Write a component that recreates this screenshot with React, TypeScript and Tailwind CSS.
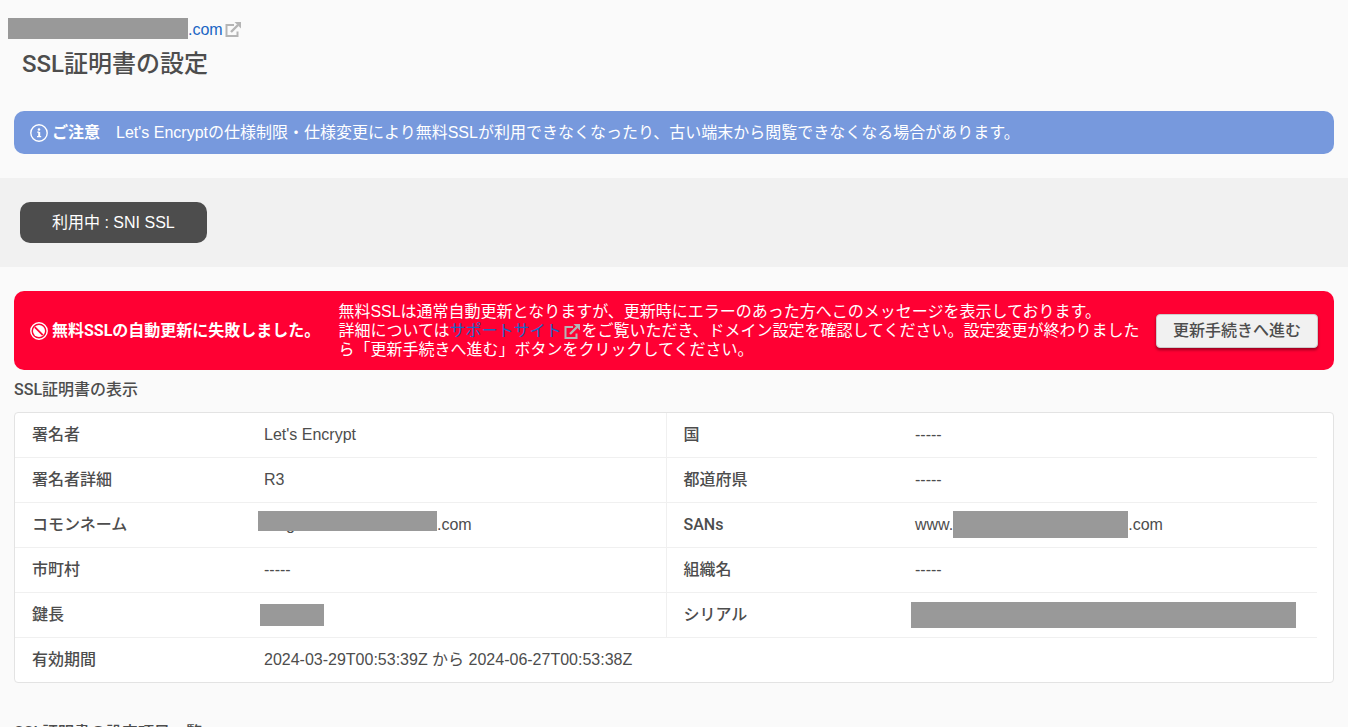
import { ReactNode } from 'react';

function ExternalIcon() {
  return (
    <svg viewBox="0 0 16 16" className="mx-0.5 inline-block size-4 text-[#b5b5b5]" fill="none" stroke="currentColor" strokeWidth="2" aria-hidden="true">
      <path d="M9 3H1.5V14H12.5V9.5" />
      <path d="M6 10L13 3" strokeWidth="2.4" />
      <path d="M9.5 0H16V6.5Z" fill="currentColor" stroke="none" />
    </svg>
  );
}

function InfoIcon() {
  return (
    <svg viewBox="0 0 18 18" className="size-[18px] shrink-0" fill="none" aria-hidden="true">
      <circle cx="9" cy="9" r="8.2" stroke="currentColor" strokeWidth="1.4" />
      <circle cx="9" cy="5.5" r="1.3" fill="currentColor" />
      <path d="M9.2 8V12.4" stroke="currentColor" strokeWidth="2" />
      <path d="M7.2 8.2H9.2M7 12.6H11.2" stroke="currentColor" strokeWidth="1.2" />
    </svg>
  );
}

function BanIcon() {
  return (
    <svg viewBox="0 0 18 18" className="size-[18px] shrink-0" fill="none" aria-hidden="true">
      <circle cx="9" cy="9" r="8.2" stroke="currentColor" strokeWidth="1.4" />
      <circle cx="9" cy="9" r="6" fill="currentColor" />
      <path d="M4.8 5.2L12.8 13.2" stroke="#ff0033" strokeWidth="1.8" />
    </svg>
  );
}

function Mask({ size }: { size: string }) {
  return <span className={`inline-block bg-[#999] align-middle ${size}`} />;
}

type Pair = [string, ReactNode];

const rows: [Pair, Pair][] = [
  [['署名者', "Let's Encrypt"], ['国', '-----']],
  [['署名者詳細', 'R3'], ['都道府県', '-----']],
  [
    [
      'コモンネーム',
      <div className="-ml-1.5 flex items-center">
        <span className="relative h-6 w-[179px]">
          <span className="pl-7">g</span>
          <span className="absolute inset-x-0 -top-0.5 h-5 bg-[#999]" />
        </span>
        .com
      </div>,
    ],
    [
      'SANs',
      <div className="flex items-center">
        www.
        <Mask size="h-[27px] w-[175px]" />
        .com
      </div>,
    ],
  ],
  [['市町村', '-----'], ['組織名', '-----']],
  [
    ['鍵長', <Mask size="-ml-1 h-[22px] w-16" />],
    ['シリアル', <Mask size="-ml-1 h-[26px] w-[385px]" />],
  ],
];

const heading = "font-['Roboto','Noto_Sans_CJK_JP',sans-serif] font-medium";

export default function App() {
  return (
    <div className="h-screen overflow-hidden bg-[#fafafa] font-['Liberation_Sans','Noto_Sans_CJK_JP',sans-serif] text-base leading-6 text-[#4d4d4d]">
      <header className="px-2 pt-[18px]">
        <a href="#site" className="flex h-6 items-start text-[#1a66c4]">
          <Mask size="h-[21px] w-[180px]" />
          .com
          <span className="flex h-6 items-center">
            <ExternalIcon />
          </span>
        </a>
        <h1 className={`px-3.5 pt-1 text-2xl leading-9 ${heading}`}>SSL証明書の設定</h1>
      </header>

      <div className="mx-3.5 mt-[29px] flex min-h-[43px] items-center rounded-[10px] bg-[#7799dd] px-4 text-white">
        <InfoIcon />
        <strong className="mr-4 ml-1">ご注意</strong>
        <p>Let's Encryptの仕様制限・仕様変更により無料SSLが利用できなくなったり、古い端末から閲覧できなくなる場合があります。</p>
      </div>

      <div className="mt-6 bg-[#f1f1f1] px-5 py-6">
        <button type="button" className="h-[41px] rounded-[10px] bg-[#4d4d4d] px-8 text-white">
          利用中 : SNI SSL
        </button>
      </div>

      <div className="mx-3.5 mt-6 flex min-h-[79px] items-center rounded-[10px] bg-[#ff0033] px-4 text-white">
        <BanIcon />
        <strong className="mr-4 ml-1 shrink-0 font-['Roboto','Noto_Sans_CJK_JP',sans-serif]">無料SSLの自動更新に失敗しました。</strong>
        <p className="flex-1 pl-0.5 leading-[19px]">
          無料SSLは通常自動更新となりますが、更新時にエラーのあった方へこのメッセージを表示しております。
          <br />
          詳細については
          <a href="#support" className="text-[#1a66c4]">
            サポートサイト
            <ExternalIcon />
          </a>
          をご覧いただき、ドメイン設定を確認してください。設定変更が終わりましたら「更新手続きへ進む」ボタンをクリックしてください。
        </p>
        <button type="button" className="ml-4 h-[34px] shrink-0 rounded border border-[#ccc] bg-[#f1f1f1] px-4 font-medium text-[#4d4d4d] shadow-[0_2px_3px_rgba(0,0,0,0.4)]">
          更新手続きへ進む
        </button>
      </div>

      <main className="px-3.5 pt-2">
        <h2 id="cert" className={heading}>SSL証明書の表示</h2>
        <div className="mt-2.5 rounded border border-[#e3e3e3] bg-white pr-4">
          <table aria-labelledby="cert" className="w-full table-fixed border-collapse text-left">
            <colgroup>
              <col className="w-[232px]" />
              <col />
              <col className="w-[232px]" />
              <col />
            </colgroup>
            <tbody>
              {rows.map(([left, right]) => (
                <tr key={left[0]} className="h-[45px] border-b border-[#f0f0f0] first:h-11">
                  <th scope="row" className={`px-[17px] ${heading}`}>{left[0]}</th>
                  <td className="border-r border-[#f0f0f0] px-[17px]">{left[1]}</td>
                  <th scope="row" className={`px-[17px] ${heading}`}>{right[0]}</th>
                  <td className="pl-[17px]">{right[1]}</td>
                </tr>
              ))}
              <tr className="h-[45px]">
                <th scope="row" className={`px-[17px] ${heading}`}>有効期間</th>
                <td colSpan={3} className="px-[17px]">2024-03-29T00:53:39Z から 2024-06-27T00:53:38Z</td>
              </tr>
            </tbody>
          </table>
        </div>
        <h2 className={`mt-[38px] ${heading}`}>SSL証明書の設定項目一覧</h2>
      </main>
    </div>
  );
}
